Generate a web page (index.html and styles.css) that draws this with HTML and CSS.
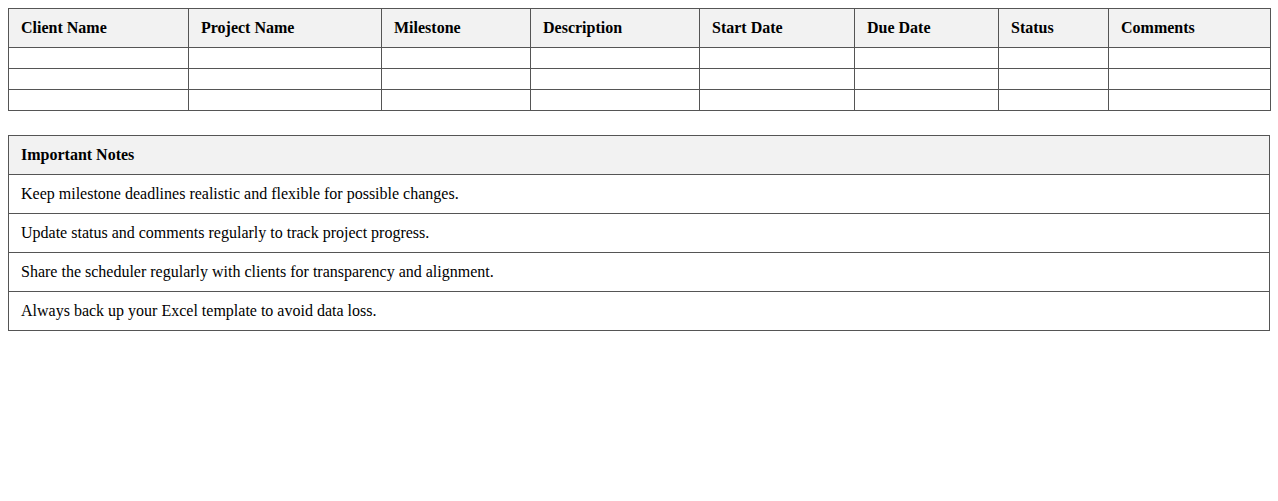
FILE: index.html
```html
<!DOCTYPE html>
<html>
<head>
<meta charset="utf-8">
<link rel="stylesheet" href="styles.css">
</head>
<body>
<table class="grid schedule">
  <thead>
    <tr>
      <th class="c1">Client Name</th>
      <th class="c2">Project Name</th>
      <th class="c3">Milestone</th>
      <th class="c4">Description</th>
      <th class="c5">Start Date</th>
      <th class="c6">Due Date</th>
      <th class="c7">Status</th>
      <th class="c8">Comments</th>
    </tr>
  </thead>
  <tbody>
    <tr><td></td><td></td><td></td><td></td><td></td><td></td><td></td><td></td></tr>
    <tr><td></td><td></td><td></td><td></td><td></td><td></td><td></td><td></td></tr>
    <tr><td></td><td></td><td></td><td></td><td></td><td></td><td></td><td></td></tr>
  </tbody>
</table>

<table class="grid notes">
  <thead>
    <tr><th>Important Notes</th></tr>
  </thead>
  <tbody>
    <tr><td>Keep milestone deadlines realistic and flexible for possible changes.</td></tr>
    <tr><td>Update status and comments regularly to track project progress.</td></tr>
    <tr><td>Share the scheduler regularly with clients for transparency and alignment.</td></tr>
    <tr><td>Always back up your Excel template to avoid data loss.</td></tr>
  </tbody>
</table>
</body>
</html>
```
FILE: styles.css
```css
html, body {
  margin: 0;
  padding: 0;
  background: #fff;
}
body {
  padding: 8px;
  font-family: "Liberation Serif", "Times New Roman", serif;
  font-size: 16px;
  color: #000;
}
.grid {
  width: 100%;
  border-collapse: collapse;
  table-layout: fixed;
}
.grid th,
.grid td {
  border: 1px solid #555;
  padding: 10px 12px;
  text-align: left;
  box-sizing: border-box;
  line-height: 18px;
}
.grid th {
  background: #f2f2f2;
  font-weight: bold;
}
.notes {
  margin-top: 24px;
}
.c1 { width: 180px; }
.c2 { width: 193px; }
.c3 { width: 149px; }
.c4 { width: 169px; }
.c5 { width: 155px; }
.c6 { width: 144px; }
.c7 { width: 110px; }
.c8 { width: 162px; }
```
